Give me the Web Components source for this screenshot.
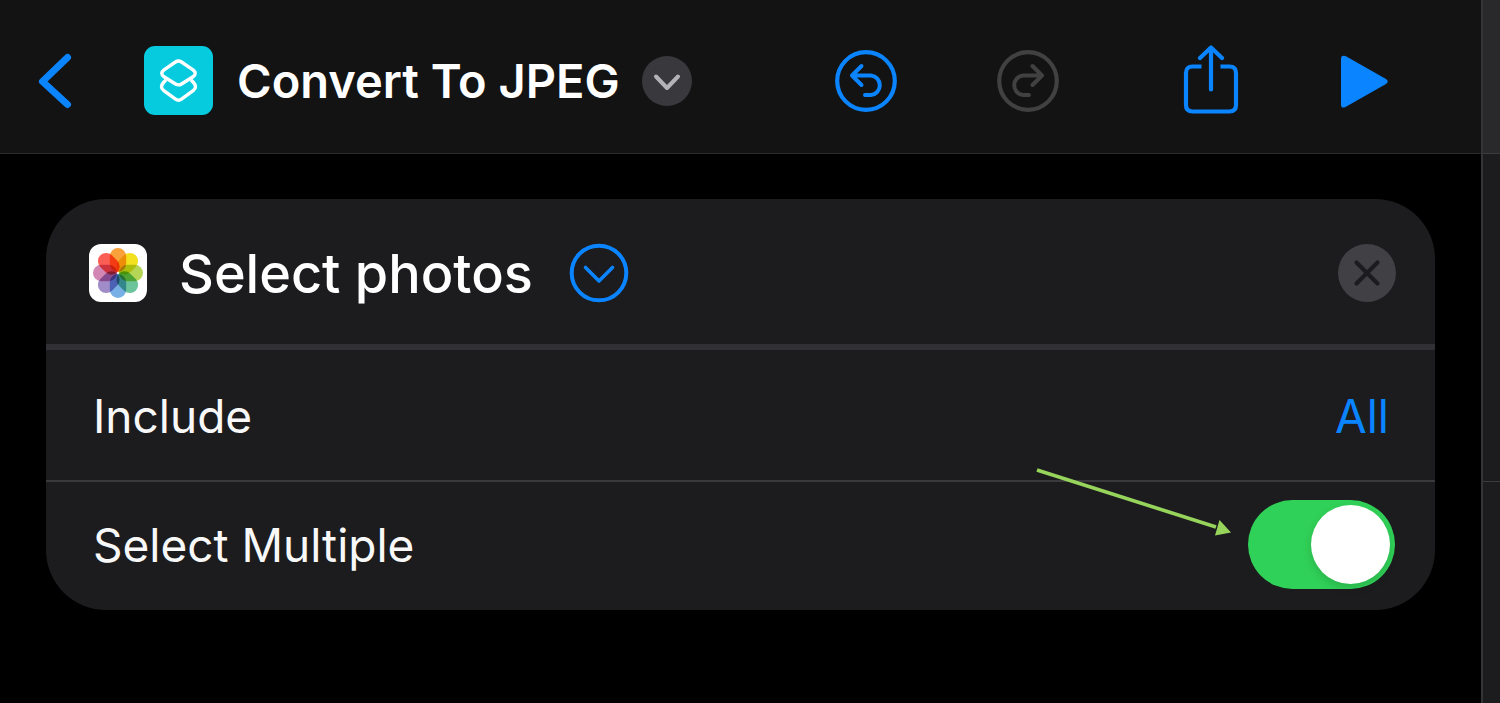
<!DOCTYPE html>
<html lang="en">
<head>
<meta charset="utf-8">
<title>Convert To JPEG</title>
<style>
  html, body { margin: 0; height: 100%; background: #000; }
  body { font-family: Inter, "Liberation Sans", sans-serif; color: #fff; }
</style>
</head>
<body>
<shortcut-editor></shortcut-editor>

<template id="t-editor">
  <style>
    :host { display: grid; grid-template-columns: 1fr 19px; min-height: 100vh; background: #000; }
    main { min-width: 0; }
    section { padding: 45px 46px; }
  </style>
  <main>
    <editor-toolbar>Convert To JPEG</editor-toolbar>
    <section><action-card><photos-icon slot="icon"></photos-icon>Select photos</action-card></section>
  </main>
  <side-panel></side-panel>
</template>

<template id="t-side">
  <style>
    :host { display: flex; flex-direction: column; box-sizing: border-box; border-left: 2px solid #343437; background: #1c1c1e; }
    .top { height: 153px; background: #29292b; border-bottom: 1px solid #3c3c3f; }
    .item { height: 327px; border-bottom: 1px solid #3c3c3f; }
  </style>
  <div class="top"></div>
  <div class="item"></div>
</template>

<template id="t-toolbar">
  <style>
    :host { display: block; background: #131313; border-bottom: 1px solid #2b2b2d; }
    header { display: flex; align-items: center; height: 145px; padding: 8px 93px 0 38px; }
    h1 { margin: 0 22px 0 24px; font-size: 47px; line-height: 56px; font-weight: 600; white-space: nowrap; }
    .app { margin-left: 72px; }
    nav { display: flex; align-items: center; gap: 123px; margin-left: auto; }
    .group { display: flex; align-items: center; gap: 100px; }
  </style>
  <header>
    <icon-button label="Back">
      <svg width="34" height="56" viewBox="0 0 34 56" fill="none" stroke="#0a84ff" stroke-width="7" stroke-linecap="round" stroke-linejoin="round"><path d="M29.500 4.500L4.500 28.500L29.500 51.500"/></svg>
    </icon-button>
    <svg class="app" width="69" height="69" viewBox="0 0 69 69" fill="none" aria-hidden="true">
      <rect width="69" height="69" rx="11" fill="#06cbdf"/>
      <g stroke="#fff" stroke-width="3.400" stroke-linejoin="round">
        <path d="M31.500 16Q34.500 14 37.500 16L49 23.800Q53.500 27.300 49 30.800L37.500 38Q34.500 39.800 31.500 38L20 30.800Q15.500 27.300 20 23.800Z"/>
        <path d="M22 33.800L19.500 36.500Q15.500 41 19.500 44.300L31.500 53.200Q34.500 55.400 37.500 53.200L49.500 44.300Q53.500 41 49.500 36.500L47 33.800"/>
      </g>
    </svg>
    <h1><slot></slot></h1>
    <icon-button label="Shortcut options">
      <svg width="50" height="50" viewBox="0 0 50 50" fill="none"><circle cx="25" cy="25" r="25" fill="#39383d"/><path d="M14 20.500L25 32L36 20.500" stroke="#b4b3b8" stroke-width="4" stroke-linecap="round" stroke-linejoin="round"/></svg>
    </icon-button>
    <nav aria-label="Shortcut actions">
      <div class="group">
        <icon-button label="Undo">
          <svg width="62" height="62" viewBox="0 0 62 62" fill="none" stroke="#0a84ff" stroke-width="4.200" stroke-linecap="round" stroke-linejoin="round"><circle cx="31" cy="31" r="28.800"/><path stroke-width="4" d="M26.500 16L17 25.500L26.500 35M17.500 25.500H36A9.800 9.800 0 0 1 36 45H30"/></svg>
        </icon-button>
        <icon-button label="Redo" disabled>
          <svg width="62" height="62" viewBox="0 0 62 62" fill="none" stroke="#414141" stroke-width="4.200" stroke-linecap="round" stroke-linejoin="round"><circle cx="31" cy="31" r="28.800"/><path stroke-width="4" d="M35.500 16L45 25.500L35.500 35M44.500 25.500H26A9.800 9.800 0 0 0 26 45H32"/></svg>
        </icon-button>
      </div>
      <div class="group">
        <icon-button label="Share">
          <svg width="58" height="72" viewBox="0 0 58 72" fill="none" stroke="#0a84ff" stroke-width="4.200" stroke-linecap="round" stroke-linejoin="round"><path stroke-linecap="butt" d="M19.500 21.500H10.500Q4 21.500 4 28V60Q4 66.500 10.500 66.500H47.500Q54 66.500 54 60V28Q54 21.500 47.500 21.500H38.500"/><path d="M18 13L29 2.500L40 13M29 3V44.500"/></svg>
        </icon-button>
        <icon-button label="Run shortcut">
          <svg width="48" height="54" viewBox="0 0 48 54"><path fill="#0a84ff" d="M1 5Q1 .5 5.500 2L46 25Q49.500 27.500 46 30L5.500 53Q1 55 1 50.500Z"/></svg>
        </icon-button>
      </div>
    </nav>
  </header>
</template>

<template id="t-icon-button">
  <style>
    :host { display: block; flex: none; }
    button { display: block; margin: 0; padding: 0; border: 0; background: none; cursor: pointer; }
    button:disabled { cursor: default; }
    ::slotted(svg) { display: block; }
  </style>
  <button type="button"><slot></slot></button>
</template>

<template id="t-photos">
  <style>
    :host { display: block; flex: none; }
    svg { display: block; }
    g { isolation: isolate; }
    .petal { mix-blend-mode: multiply; }
  </style>
  <svg width="58" height="58" viewBox="-29 -29 58 58" aria-hidden="true">
    <g>
      <rect x="-29" y="-29" width="58" height="58" rx="12" fill="#fff"/>
      <rect class="petal" x="-8.200" y="-25" width="16.400" height="24" rx="8.200" fill="#f9a13a"/>
      <rect class="petal" x="-8.200" y="-25" width="16.400" height="24" rx="8.200" fill="#f3e11f" transform="rotate(45)"/>
      <rect class="petal" x="-8.200" y="-25" width="16.400" height="24" rx="8.200" fill="#b5d655" transform="rotate(90)"/>
      <rect class="petal" x="-8.200" y="-25" width="16.400" height="24" rx="8.200" fill="#6cc49a" transform="rotate(135)"/>
      <rect class="petal" x="-8.200" y="-25" width="16.400" height="24" rx="8.200" fill="#78b0e6" transform="rotate(180)"/>
      <rect class="petal" x="-8.200" y="-25" width="16.400" height="24" rx="8.200" fill="#a08cc8" transform="rotate(225)"/>
      <rect class="petal" x="-8.200" y="-25" width="16.400" height="24" rx="8.200" fill="#d286b4" transform="rotate(270)"/>
      <rect class="petal" x="-8.200" y="-25" width="16.400" height="24" rx="8.200" fill="#fa5e55" transform="rotate(315)"/>
    </g>
  </svg>
</template>

<template id="t-card">
  <style>
    :host { display: block; overflow: hidden; border-radius: 60px; background: #1c1c1e; }
    .head { display: flex; align-items: center; height: 143px; padding: 2px 39px 0 43px; border-bottom: 6px solid #313135; }
    h2 { margin: 0 36px 0 32px; padding-top: 2px; font-size: 54px; line-height: 64px; font-weight: 500; white-space: nowrap; }
    .remove { margin-left: auto; }
    setting-row { padding-top: 2px; }
    setting-row + setting-row { padding-top: 0; padding-bottom: 3px; border-top: 2px solid #3a3a3c; }
    select { appearance: none; field-sizing: content; margin: 0; padding: 0 6px 0 0; border: 0; background: none; color: #0a84ff; font: inherit; text-align-last: right; cursor: pointer; }
    .switch { position: relative; display: flex; }
    input { appearance: none; box-sizing: border-box; width: 147px; height: 89px; margin: 0; padding: 5px; border-radius: 45px; background: #39393d; display: flex; align-items: center; cursor: pointer; }
    input::before { content: ""; width: 79px; height: 79px; border-radius: 50%; background: #fff; box-shadow: 0 4px 10px rgba(0,0,0,.15); }
    input:checked { background: #30d158; justify-content: flex-end; }
    .pointer { position: absolute; right: 164px; top: -33px; }
  </style>
  <div class="head">
    <slot name="icon"></slot>
    <h2><slot></slot></h2>
    <icon-button label="Action options">
      <svg width="60" height="60" viewBox="0 0 60 60" fill="none" stroke="#0a84ff" stroke-linecap="round" stroke-linejoin="round"><circle cx="30" cy="30" r="27.300" stroke-width="4"/><path d="M16.500 24.500L30 38L43.500 24.500" stroke-width="3.600"/></svg>
    </icon-button>
    <icon-button class="remove" label="Remove action">
      <svg width="58" height="58" viewBox="0 0 58 58" fill="none"><circle cx="29" cy="29" r="29" fill="#414045"/><path d="M18.500 18.500L39.500 39.500M39.500 18.500L18.500 39.500" stroke="#1c1c1e" stroke-width="4.200" stroke-linecap="round"/></svg>
    </icon-button>
  </div>
  <setting-row>
    <label slot="label" for="include">Include</label>
    <select id="include"><option>All</option></select>
  </setting-row>
  <setting-row>
    <label slot="label" for="multiple">Select Multiple</label>
    <div class="switch">
      <input id="multiple" type="checkbox" role="switch" checked>
      <svg class="pointer" width="196" height="72" viewBox="0 0 196 72" aria-hidden="true"><path d="M2 3L181 60" stroke="#97d45c" stroke-width="3.600"/><path d="M184.500 53L196 65.500L180 68.500Z" fill="#97d45c"/></svg>
    </div>
  </setting-row>
</template>

<template id="t-row">
  <style>
    :host { display: flex; align-items: center; justify-content: space-between; box-sizing: border-box; height: 130px; padding: 0 40px 0 47px; font-size: 46px; line-height: 56px; color: #f8f8f8; }
  </style>
  <slot name="label"></slot>
  <slot></slot>
</template>

<script>
  function define(name, templateId, ready) {
    customElements.define(name, class extends HTMLElement {
      constructor() {
        super();
        this.attachShadow({ mode: "open" })
          .append(document.getElementById(templateId).content.cloneNode(true));
      }
      connectedCallback() { if (ready) ready(this); }
    });
  }
  define("icon-button", "t-icon-button", host => {
    const button = host.shadowRoot.querySelector("button");
    button.setAttribute("aria-label", host.getAttribute("label"));
    button.disabled = host.hasAttribute("disabled");
  });
  define("photos-icon", "t-photos");
  define("setting-row", "t-row");
  define("action-card", "t-card");
  define("editor-toolbar", "t-toolbar");
  define("side-panel", "t-side");
  define("shortcut-editor", "t-editor");
</script>
</body>
</html>
